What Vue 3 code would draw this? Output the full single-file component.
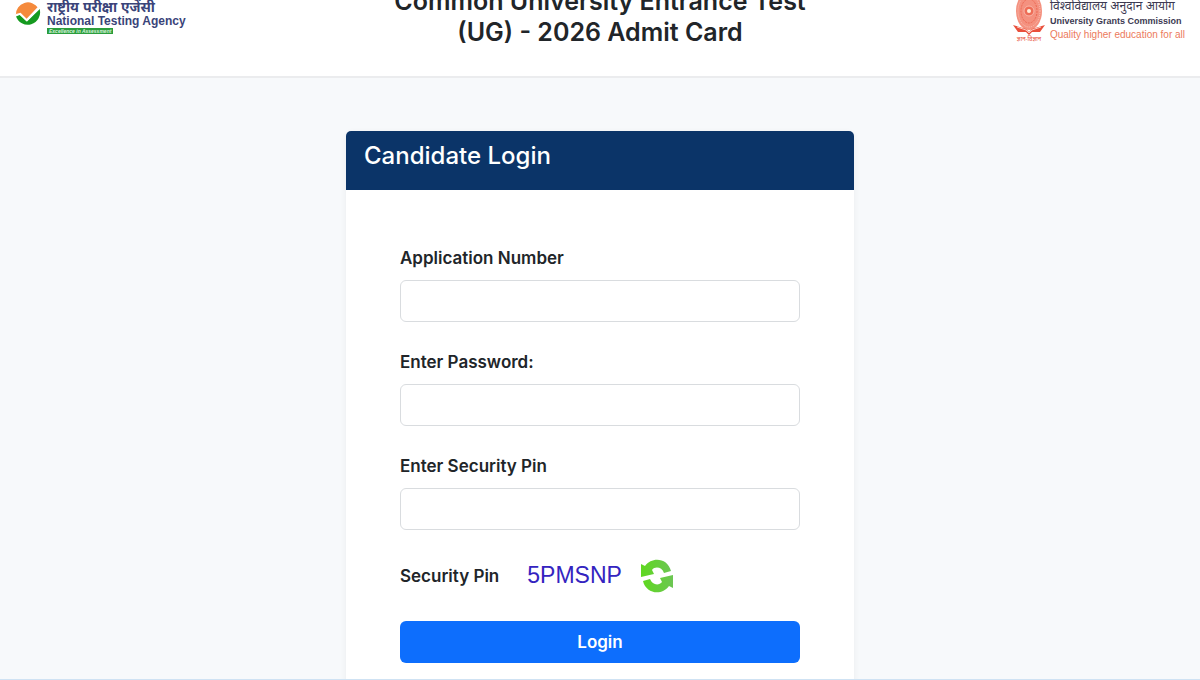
<template>
    <div class="page">
        <header class="top-bar">
            <div class="brand">
                <svg class="nta-logo" viewBox="0 0 28 28" aria-hidden="true">
                    <path d="M1 14 A13 13 0 0 1 25 6.5 L13 20 L6 12 Z" fill="#f58a3c" />
                    <path d="M1 15 L5 13 L13 21 L26.5 7.5 A13 13 0 1 1 1 15 Z" fill="#159a1f" />
                    <path d="M1 13 L6 11.5 L12.5 18 L24.5 5.5 L26 8 L12.5 21 L5 14 L1 15.5 Z" fill="#fff" />
                </svg>
                <div class="brand-text">
                    <span class="nta-hindi">राष्ट्रीय परीक्षा एजेंसी</span>
                    <span class="nta-name">National Testing Agency</span>
                    <span class="nta-tag">Excellence in Assessment</span>
                </div>
            </div>
            <h1>Common University Entrance Test (UG) - 2026 Admit Card</h1>
            <div class="brand brand-right">
                <svg class="ugc-logo" viewBox="0 0 34 48" aria-hidden="true">
                    <ellipse cx="17" cy="17" rx="13" ry="19" fill="#f4917f" />
                    <ellipse cx="17" cy="17" rx="11" ry="16" fill="none" stroke="#fbc3b8" stroke-dasharray="1 1" />
                    <ellipse cx="17" cy="17" rx="8" ry="12" fill="none" stroke="#ec6a55" stroke-dasharray="2 1" />
                    <circle cx="17" cy="17" r="5" fill="#ee6d57" stroke="#f9b7aa" />
                    <circle cx="17" cy="17" r="2" fill="#fff0dc" />
                    <path d="M1 31 L14 35 L17 38 L20 35 L33 31 L28 38 L20 38 L17 41 L14 38 L6 38 Z" fill="#e9503c" />
                    <path d="M5 33 L14 36 L17 39 L20 36 L29 33" fill="none" stroke="#fbc3b8" />
                    <text x="17" y="47" text-anchor="middle" font-size="6" fill="#e8533c">ज्ञान-विज्ञान</text>
                </svg>
                <div class="brand-text">
                    <span class="ugc-hindi">विश्वविद्यालय अनुदान आयोग</span>
                    <span class="ugc-name">University Grants Commission</span>
                    <span class="ugc-tag">Quality higher education for all</span>
                </div>
            </div>
        </header>

        <main>
            <section class="card">
                <h2>Candidate Login</h2>
                <form @submit.prevent>
                    <div class="field" v-for="field in fields" :key="field.id">
                        <label :for="field.id">{{ field.label }}</label>
                        <input :id="field.id" :type="field.type" v-model="field.value">
                    </div>
                    <div class="captcha">
                        <span class="captcha-label">Security Pin</span>
                        <span class="captcha-pin">{{ pin }}</span>
                        <button type="button" class="refresh" aria-label="Refresh security pin">
                            <svg viewBox="0 0 34 34">
                                <defs>
                                    <linearGradient id="green" x1="0" y1="0" x2="1" y2="0">
                                        <stop offset="0" stop-color="#5fd81f" />
                                        <stop offset="1" stop-color="#6cc653" />
                                    </linearGradient>
                                </defs>
                                <path d="M1 5 L5 7 C12 -3 28 -1 31 12 L24 14 C22 8 15 7 12 11 L14 15 L1 18 Z" fill="url(#green)" />
                                <path d="M33 29 L29 27 C22 37 6 35 3 22 L10 20 C12 26 19 27 22 23 L20 19 L33 16 Z" fill="url(#green)" />
                            </svg>
                        </button>
                    </div>
                    <button type="submit" class="login">Login</button>
                </form>
            </section>
        </main>
    </div>
</template>

<script setup>
import { ref } from 'vue';

const pin = ref('5PMSNP');
const fields = ref([
    { id: 'application-number', label: 'Application Number', type: 'text', value: '' },
    { id: 'password', label: 'Enter Password:', type: 'password', value: '' },
    { id: 'security-pin', label: 'Enter Security Pin', type: 'text', value: '' }
]);
</script>

<style>
body {
    margin: 0;
}
</style>

<style scoped>
.page {
    box-sizing: border-box;
    height: 100vh;
    overflow: hidden;
    border-bottom: 1px solid #cfe2f3;
    background: #f7f9fb;
    color: #212529;
    font-family: Inter, "Liberation Sans", sans-serif;
}

/* the bar keeps only its lower part in view */
.top-bar {
    box-sizing: border-box;
    display: flex;
    align-items: flex-end;
    justify-content: space-between;
    height: 78px;
    padding: 0 15px 28px;
    overflow: hidden;
    border-bottom: 2px solid #ebecee;
    background: #fff;
}

h1 {
    width: 440px;
    margin: 0;
    font-size: 25px;
    font-weight: 600;
    line-height: 31px;
    text-align: center;
}

.brand {
    display: flex;
    flex: 1;
    align-items: flex-end;
    gap: 6px;
    padding-bottom: 14px;
    font-family: "Liberation Sans", "Noto Sans", sans-serif;
    white-space: nowrap;
}

.brand-right {
    justify-content: flex-end;
    gap: 4px;
    padding-bottom: 6px;
}

.brand-text {
    display: flex;
    flex-direction: column;
    align-items: flex-start;
}

.nta-logo {
    width: 26px;
    height: 26px;
    padding-bottom: 6px;
}

.ugc-logo {
    width: 34px;
    height: 48px;
}

.nta-hindi {
    color: #3a4479;
    font-size: 14px;
    font-weight: 700;
    line-height: 14px;
}

.nta-name {
    color: #3a4479;
    font-size: 12px;
    font-weight: 700;
    line-height: 14px;
}

.nta-tag {
    padding: 0 2px;
    background: #2a9d3c;
    color: #d8f3dc;
    font-size: 5px;
    font-style: italic;
    font-weight: 700;
    line-height: 6px;
}

.ugc-hindi {
    color: #3c3a52;
    font-size: 12px;
    line-height: 16px;
}

.ugc-name {
    color: #3c3a52;
    font-size: 9px;
    font-weight: 700;
    line-height: 14px;
}

.ugc-tag {
    color: #ec7a5c;
    font-size: 10px;
    line-height: 14px;
}

main {
    padding: 53px 16px 0;
}

.card {
    max-width: 508px;
    margin: 0 auto;
    overflow: hidden;
    border-radius: 5px;
    background: #fff;
    box-shadow: 0 2px 6px rgba(0, 0, 0, .06);
}

h2 {
    margin: 0;
    padding: 10px 18px 19px;
    background: #0b3468;
    color: #fff;
    font-size: 24px;
    font-weight: 500;
    line-height: 30px;
}

form {
    display: flex;
    flex-direction: column;
    gap: 28px;
    padding: 56px 54px;
}

.field {
    display: flex;
    flex-direction: column;
    gap: 10px;
}

label,
.captcha-label {
    font-size: 17px;
    font-weight: 600;
    line-height: 24px;
}

input {
    box-sizing: border-box;
    width: 100%;
    height: 42px;
    padding: 0 12px;
    border: 1px solid #d9dcdf;
    border-radius: 6px;
    background: #fff;
    font: inherit;
    font-size: 17px;
}

.captcha {
    display: flex;
    align-items: center;
    height: 35px;
}

.captcha-pin {
    margin: 0 18px 0 28px;
    color: #3424c0;
    font-family: "Liberation Sans", sans-serif;
    font-size: 23px;
}

.refresh {
    width: 34px;
    height: 34px;
    padding: 0;
    border: 0;
    background: none;
    cursor: pointer;
}

.refresh svg {
    display: block;
}

.login {
    height: 42px;
    border: 0;
    border-radius: 6px;
    background: #0d6efd;
    color: #fff;
    font: inherit;
    font-size: 17px;
    font-weight: 600;
    cursor: pointer;
}
</style>
